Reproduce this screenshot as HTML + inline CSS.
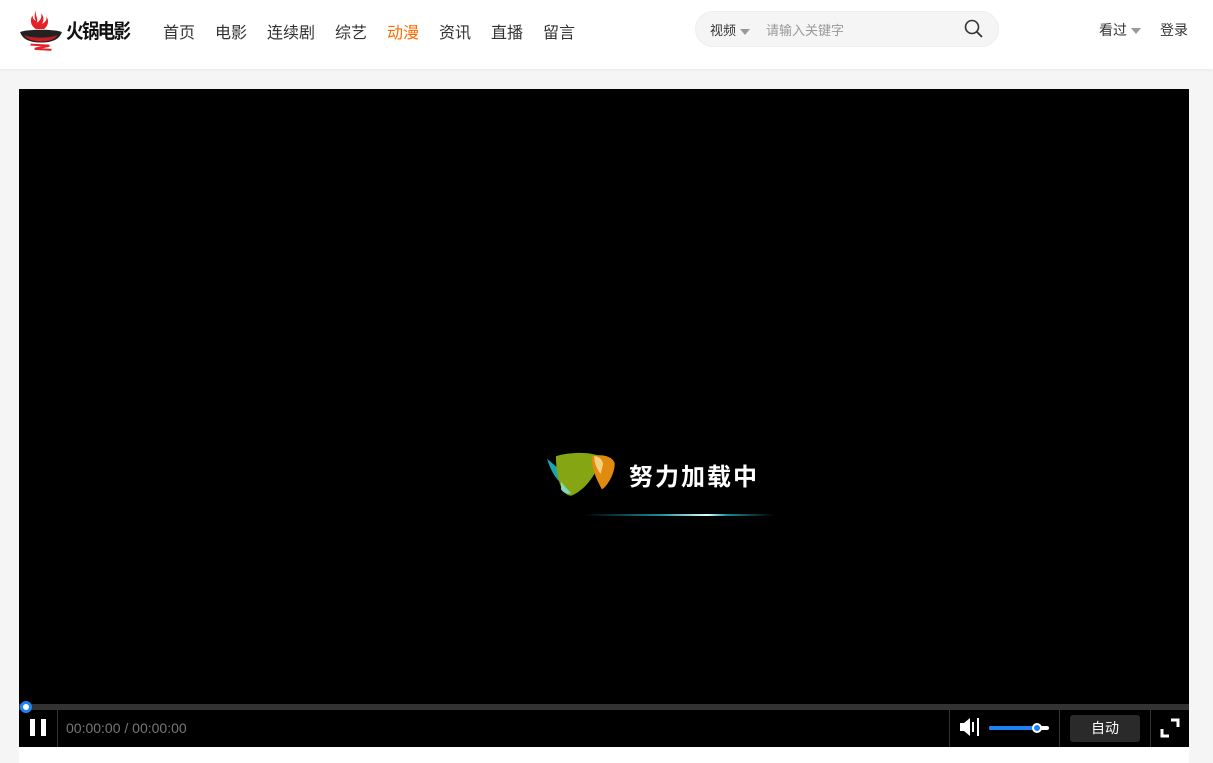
<!DOCTYPE html>
<html><head><meta charset="utf-8"><style>
*{margin:0;padding:0;box-sizing:border-box}
body{width:1213px;height:763px;background:#f5f5f5;font-family:"Liberation Sans","Noto Sans CJK SC",sans-serif;overflow:hidden;position:relative}
.hd{position:absolute;left:0;top:0;width:1213px;height:69px;background:#fff;box-shadow:0 1px 3px rgba(0,0,0,.06)}
.nav a{position:absolute;top:19px;font-size:16px;color:#333;text-decoration:none}
.logo{position:absolute;left:18px;top:7px}
.brand{position:absolute;left:66px;top:15px;font-size:20px;color:#111;letter-spacing:-2px;font-weight:bold;transform:scaleX(.88);transform-origin:left}
.search{position:absolute;left:695px;top:11px;width:304px;height:36px;background:#f5f5f5;border:1px solid #eee;border-radius:18px}
.tri{display:inline-block;width:0;height:0;border-left:5px solid transparent;border-right:5px solid transparent;border-top:6px solid #999;vertical-align:middle}
.player{position:absolute;left:19px;top:89px;width:1170px;height:658px;background:#000}
.white{position:absolute;left:19px;top:747px;width:1170px;height:16px;background:#fff}
.t{position:absolute;color:#fff}
</style></head><body>
<div class="hd">
 <svg class="logo" width="46" height="46" viewBox="0 0 44 44">
  <path d="M18 2c-3 5 2 8 0 13 4-2 5-6 4-9 3 3 3 7 1 10 3-1 5-4 4-7 3 4 2 9-2 12h-8c-5-3-6-9-3-13 0 3 1 4 3 5-2-4-1-8 1-11z" fill="#e4222a"/>
  <path d="M2 24c6-3 34-3 40 0-2 6-8 10-20 10S4 30 2 24z" fill="#222"/>
  <path d="M6 27c8 3 24 3 32 0-3 4-9 6-16 6S9 31 6 27z" fill="#c81d24"/>
  <path d="M12 36l18 1-14 3 16 1" stroke="#e4222a" stroke-width="2" fill="none"/>
 </svg>
 <div class="brand">火锅电影</div>
 <div class="nav">
  <a style="left:163px">首页</a><a style="left:215px">电影</a><a style="left:267px">连续剧</a><a style="left:335px">综艺</a><a style="left:387px;color:#ff6a00">动漫</a><a style="left:439px">资讯</a><a style="left:491px">直播</a><a style="left:543px">留言</a>
 </div>
 <div class="search">
  <span style="position:absolute;left:14px;top:8px;font-size:13px;color:#333">视频 <span class="tri"></span></span>
  <span style="position:absolute;left:70px;top:8px;font-size:13px;color:#999">请输入关键字</span>
  <svg style="position:absolute;left:268px;top:7px" width="20" height="20" viewBox="0 0 20 20"><circle cx="8" cy="8" r="6.5" stroke="#333" stroke-width="1.6" fill="none"/><path d="M13 13l5 5" stroke="#333" stroke-width="1.8"/></svg>
 </div>
 <span style="position:absolute;left:1099px;top:20px;font-size:14px;color:#333">看过 <span class="tri"></span></span>
 <span style="position:absolute;left:1160px;top:20px;font-size:14px;color:#333">登录</span>
</div>
<div class="player">
 <svg style="position:absolute;left:525px;top:362px" width="75" height="46" viewBox="0 0 56 36">
  <path d="M1 6c3 10 8 18 13 20 2-3 0-8-6-14z" fill="#14a8b0"/>
  <path d="M8 4c14-4 30-3 36 1-4 12-12 25-24 30C12 35 8 20 8 4z" fill="#86a513"/>
  <path d="M36 4c10-2 17 1 18 6 0 8-6 18-10 20-3-6-8-14-8-26z" fill="#e08a0e"/>
  <path d="M38 4c3 0 6 2 7 6l-2 8c-3-4-5-8-5-14z" fill="#f2d27a"/>
  <path d="M12 24c3 4 6 7 8 9-3 1-6 0-8-3z" fill="#7fd9b8"/>
 </svg>
 <div class="t" style="left:610px;top:368px;font-size:24px;font-weight:bold;letter-spacing:2px">努力加载中</div>
 <div style="position:absolute;left:565px;top:425px;width:190px;height:2px;background:linear-gradient(90deg,transparent,#1a8c99 40%,#e0ffff 65%,#1a8c99 75%,transparent)"></div>
 <div style="position:absolute;left:0;top:615px;width:1170px;height:6px;background:#333"></div>
 <div style="position:absolute;left:1px;top:612px;width:12px;height:12px;border-radius:50%;background:#fff;border:3px solid #1e82f0"></div>
 <div style="position:absolute;left:11px;top:630px;width:5px;height:17px;background:#fff"></div>
 <div style="position:absolute;left:22px;top:630px;width:5px;height:17px;background:#fff"></div>
 <div style="position:absolute;left:38px;top:621px;width:1px;height:37px;background:#333"></div>
 <div style="position:absolute;left:47px;top:631px;font-size:14px;color:#777">00:00:00 / 00:00:00</div>
 <div style="position:absolute;left:930px;top:621px;width:1px;height:37px;background:#333"></div>
 <svg style="position:absolute;left:940px;top:628px" width="22" height="20" viewBox="0 0 22 20"><path d="M1 6h4l6-5v18l-6-5H1z" fill="#fff"/><rect x="13" y="5" width="2" height="10" fill="#fff"/><rect x="18" y="1" width="2" height="18" fill="#fff"/></svg>
 <div style="position:absolute;left:970px;top:637px;width:60px;height:4px;background:#fff;border-radius:2px"></div>
 <div style="position:absolute;left:970px;top:637px;width:48px;height:4px;background:#1e82f0;border-radius:2px"></div>
 <div style="position:absolute;left:1013px;top:634px;width:10px;height:10px;border-radius:50%;background:#1e82f0;border:2px solid #fff"></div>
 <div style="position:absolute;left:1040px;top:621px;width:1px;height:37px;background:#333"></div>
 <div style="position:absolute;left:1051px;top:626px;width:70px;height:27px;background:#2a2a2a;border-radius:3px;color:#fff;font-size:14px;text-align:center;line-height:27px">自动</div>
 <div style="position:absolute;left:1131px;top:621px;width:1px;height:37px;background:#333"></div>
 <svg style="position:absolute;left:1141px;top:629px" width="20" height="20" viewBox="0 0 20 20"><path d="M11 2h7v7M9 18H2v-7" stroke="#fff" stroke-width="3" fill="none"/></svg>
</div>
<div class="white"></div>
</body></html>
